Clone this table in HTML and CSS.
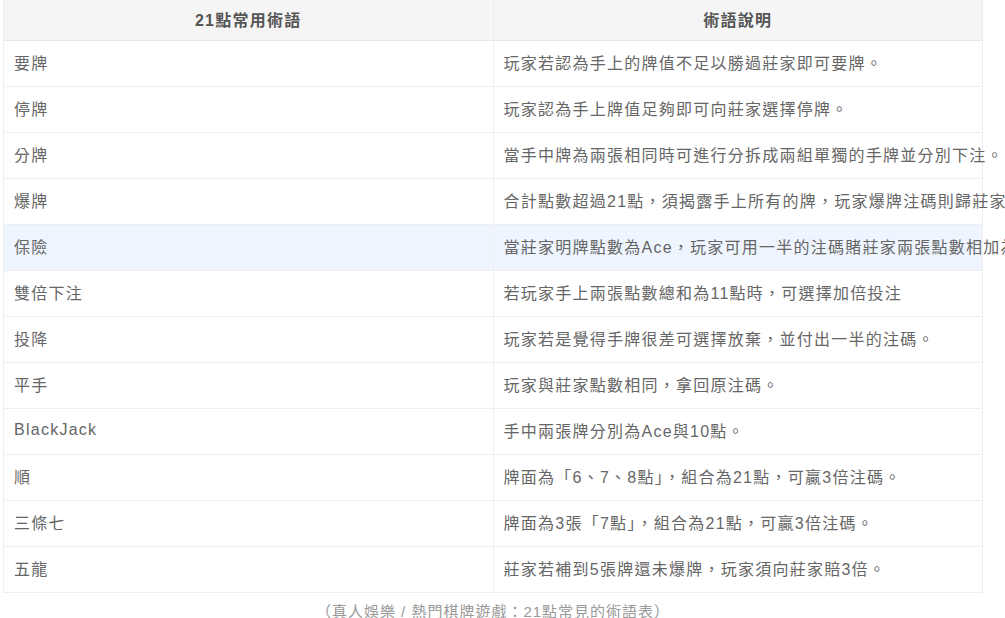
FILE: index.html
```html
<!DOCTYPE html>
<html lang="zh-Hant">
<head>
<meta charset="utf-8">
<title>21點常用術語</title>
<link rel="stylesheet" href="styles.css">
</head>
<body>
<div class="wrap">
  <table class="terms">
    <thead>
      <tr><th>21點常用術語</th><th>術語說明</th></tr>
    </thead>
    <tbody>
      <tr><td>要牌</td><td>玩家若認為手上的牌值不足以勝過莊家即可要牌。</td></tr>
      <tr><td>停牌</td><td>玩家認為手上牌值足夠即可向莊家選擇停牌。</td></tr>
      <tr><td>分牌</td><td>當手中牌為兩張相同時可進行分拆成兩組單獨的手牌並分別下注。</td></tr>
      <tr><td>爆牌</td><td>合計點數超過21點，須揭露手上所有的牌，玩家爆牌注碼則歸莊家所有。</td></tr>
      <tr class="hover"><td>保險</td><td>當莊家明牌點數為Ace，玩家可用一半的注碼賭莊家兩張點數相加為21點。</td></tr>
      <tr><td>雙倍下注</td><td>若玩家手上兩張點數總和為11點時，可選擇加倍投注</td></tr>
      <tr><td>投降</td><td>玩家若是覺得手牌很差可選擇放棄，並付出一半的注碼。</td></tr>
      <tr><td>平手</td><td>玩家與莊家點數相同，拿回原注碼。</td></tr>
      <tr><td>BlackJack</td><td>手中兩張牌分別為Ace與10點。</td></tr>
      <tr><td>順</td><td>牌面為「6、7、8點」，組合為21點，可贏3倍注碼。</td></tr>
      <tr><td>三條七</td><td>牌面為3張「7點」，組合為21點，可贏3倍注碼。</td></tr>
      <tr><td>五龍</td><td>莊家若補到5張牌還未爆牌，玩家須向莊家賠3倍。</td></tr>
    </tbody>
  </table>
  <p class="caption">（真人娛樂 / 熱門棋牌遊戲：21點常見的術語表）</p>
</div>
</body>
</html>
```
FILE: styles.css
```css
html, body {
  margin: 0;
  padding: 0;
  overflow: hidden;
  background: #fff;
}
body {
  font-family: "Liberation Sans", "Noto Sans CJK TC", sans-serif;
  color: #666;
}
.wrap {
  padding-left: 3px;
  width: 980px;
}
.terms {
  width: 980px;
  table-layout: fixed;
  border-collapse: collapse;
  border-left: 1px solid #eee;
  border-right: 1px solid #eee;
}
.terms th, .terms td {
  white-space: nowrap;
  overflow: visible;
  text-align: left;
  padding: 0 10px 3px;
  font-size: 16px;
  letter-spacing: 1.25px;
}
.terms th {
  background: #f5f5f5;
  color: #555;
  font-weight: bold;
  text-align: center;
  height: 38px;
  padding-bottom: 2px;
  border-bottom: 1px solid #e8e8e8;
  border-right: 1px solid #ececec;
}
.terms td {
  height: 42px;
  border-bottom: 1px solid #eee;
  border-right: 1px solid #eee;
}
.terms tr.hover td {
  background: #eef5fe;
}
.caption {
  margin: 0;
  padding-top: 8px;
  text-align: center;
  font-size: 15px;
  letter-spacing: 1px;
  line-height: 22px;
  color: #999;
}
```
